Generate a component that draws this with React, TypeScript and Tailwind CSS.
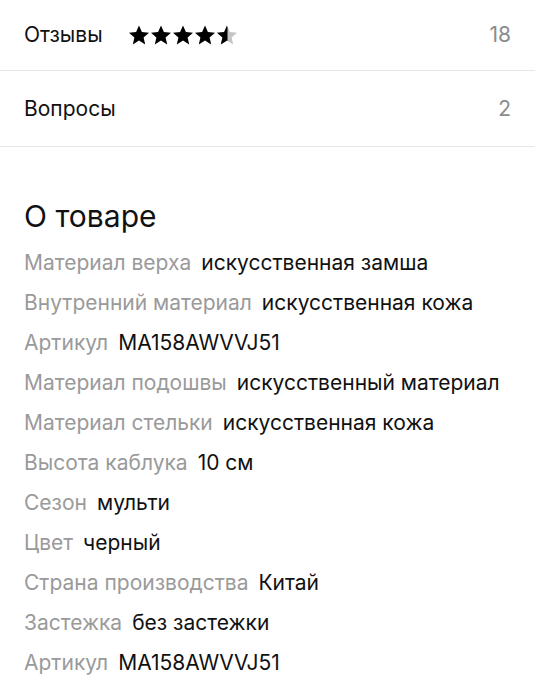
import React from "react";

const props: [string, string][] = [
  ["Материал верха", "искусственная замша"],
  ["Внутренний материал", "искусственная кожа"],
  ["Артикул", "MA158AWVVJ51"],
  ["Материал подошвы", "искусственный материал"],
  ["Материал стельки", "искусственная кожа"],
  ["Высота каблука", "10 см"],
  ["Сезон", "мульти"],
  ["Цвет", "черный"],
  ["Страна производства", "Китай"],
  ["Застежка", "без застежки"],
  ["Артикул", "MA158AWVVJ51"],
];

const STAR = "M12 2.5l2.9 6.6 7.1.6-5.4 4.7 1.6 7-6.2-3.8-6.2 3.8 1.6-7L2 9.7l7.1-.6z";

function Stars() {
  return (
    <div className="flex items-center">
      {[0, 1, 2, 3].map((i) => (
        <svg key={i} width="22" height="22" viewBox="1 1 22 22">
          <path d={STAR} fill="#000" />
        </svg>
      ))}
      <svg width="22" height="22" viewBox="1 1 22 22">
        <defs>
          <clipPath id="half">
            <rect x="0" y="0" width="12.5" height="24" />
          </clipPath>
        </defs>
        <path d={STAR} fill="#c4c4c4" />
        <path d={STAR} fill="#000" clipPath="url(#half)" />
      </svg>
    </div>
  );
}

export default function App() {
  return (
    <div className="w-[535px] h-[700px] overflow-hidden bg-white text-[#111] font-['Inter',sans-serif]">
      <div className="flex items-center justify-between h-[71px] px-6 border-b border-[#e6e6e6] text-[21px]">
        <div className="flex items-center gap-[25px]">
          <span>Отзывы</span>
          <Stars />
        </div>
        <span className="text-[#8c8c8c]">18</span>
      </div>
      <div className="flex items-center justify-between h-[76px] px-6 border-b border-[#e6e6e6] text-[21px]">
        <span>Вопросы</span>
        <span className="text-[#8c8c8c]">2</span>
      </div>

      <div className="px-6 pt-[48px]">
        <h2 className="text-[30px] leading-[42px] mb-[6px]">О товаре</h2>
        <div className="flex flex-col">
          {props.map(([k, v], i) => (
            <div key={i} className="flex items-center gap-[10px] h-[40px] text-[21px]">
              <span className="text-[#9a9a9a]">{k}</span>
              <span>{v}</span>
            </div>
          ))}
        </div>
      </div>
    </div>
  );
}
